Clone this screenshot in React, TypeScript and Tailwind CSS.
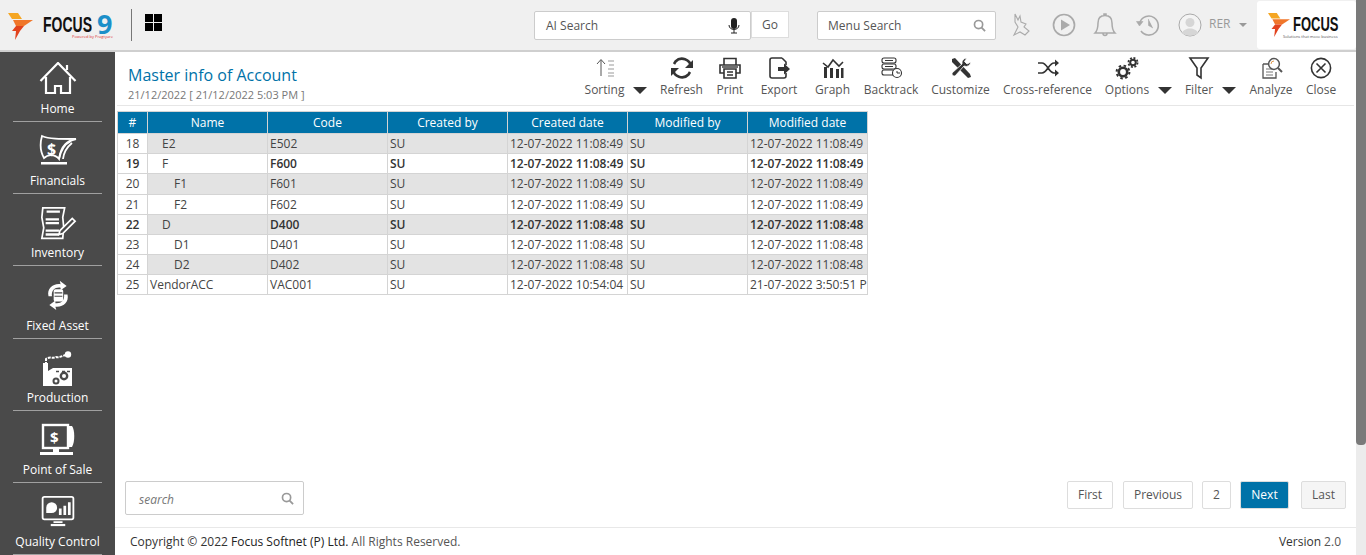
import React from "react";

const F = "font-['Open_Sans',sans-serif]";

function FocusMark({ className }: { className?: string }) {
  return (
    <svg viewBox="0 0 25 27" className={className}>
      <path d="M0 0 H10 L14 6 H4 Z" fill="#f5a623" />
      <path d="M5 7 H25 L16 13 H8 Z" fill="#f0762a" />
      <path d="M8 13 H16 L12 18 L7 27 L8 18 H4 Z" fill="#e2431e" />
    </svg>
  );
}

const S = { fill: "none", stroke: "#fff", strokeWidth: 1.8 };

function SideIcon({ n }: { n: number }) {
  const c = "w-[38px] h-[38px] mb-[1px]";
  if (n === 0)
    return (
      <svg viewBox="0 2 38 38" className={c}>
        <path d="M1.5 21 L19 3 L36.5 21 M7 17 V33 H16 V26 H22 V33 H31 V17 M28 10 V5" {...S} strokeWidth={2.2} />
      </svg>
    );
  if (n === 1)
    return (
      <svg viewBox="0 3 38 38" className={c}>
        <path d="M3 5 C10 8 20 8 37 8 C28 10 22 14 20 28 C15 22 8 24 5 27 C1 20 1 12 3 5Z" {...S} />
        <text x="8" y="24" fill="#fff" fontSize="16" fontWeight="700" fontFamily="Open Sans">$</text>
        <path d="M20 28 C22 18 26 13 32 10 M24 28 C25 20 28 16 33 12" {...S} />
        <rect x="2" y="31" width="26" height="2.5" fill="#fff" />
      </svg>
    );
  if (n === 2)
    return (
      <svg viewBox="0 0 38 40" className={c}>
        <path d="M3 2 H26 L24 12 L25 22 L24 34 H2 L4 23 L2 12 Z" {...S} />
        <path d="M7 6 H21 M6 14 H20 M6 18 H20 M6 26 H20 M6 30 H20" stroke="#fff" strokeWidth="2.4" />
        <path d="M21 26 L34 13 L37 16 L24 29 L20 30 Z" fill="#4a4a4a" stroke="#fff" strokeWidth="1.8" />
      </svg>
    );
  if (n === 3)
    return (
      <svg viewBox="0 0 38 44" className={c}>
        <path d="M8 20 C6 11 13 5 22 6 L21 2 L29 8 L22 13 L22 10 C16 9 11 13 12 20Z" fill="#fff" />
        <path d="M30 18 C32 27 25 33 16 32 L17 36 L9 30 L16 25 L16 28 C22 29 27 25 26 18Z" fill="#fff" />
        <rect x="14" y="12" width="11" height="14" rx="2" fill="#fff" />
        <path d="M15 16 H24 M15 20 H24" stroke="#4a4a4a" strokeWidth="1.3" />
      </svg>
    );
  if (n === 4)
    return (
      <svg viewBox="0 0 38 38" className={c}>
        <path d="M7 14 V8 C11 5 14 8 17 6 C20 7 23 5 27 4" fill="none" stroke="#fff" strokeWidth="2" strokeDasharray="3 1" />
        <circle cx="29" cy="3.5" r="3.2" fill="#fff" />
        <path d="M4 35 V12 H9 V20 L14 17 H33 V35 Z" fill="#fff" />
        <circle cx="17" cy="30" r="3.5" fill="#4a4a4a" />
        <circle cx="25" cy="25" r="4.4" fill="#4a4a4a" />
        <circle cx="25" cy="25" r="2" fill="#fff" />
        <circle cx="17" cy="30" r="1.5" fill="#fff" />
        <path d="M17 20.5 H20 M23 20.5 H26 M28 20.5 H31" stroke="#4a4a4a" strokeWidth="1.5" />
      </svg>
    );
  if (n === 5)
    return (
      <svg viewBox="0 1 38 38" className={c}>
        <rect x="4" y="3" width="25" height="23" {...S} strokeWidth={2.4} />
        <path d="M30 4 H33 C36 8 36 20 33 25 H30 Z" fill="#fff" />
        <rect x="1" y="30" width="33" height="3" fill="#fff" />
        <rect x="14" y="26" width="6" height="4" fill="#fff" />
        <text x="11" y="21" fill="#fff" fontSize="15" fontWeight="700" fontFamily="Open Sans">$</text>
      </svg>
    );
  return (
    <svg viewBox="0 0 38 42" className={c}>
      <rect x="2" y="2" width="34" height="25" rx="2" {...S} strokeWidth={2} />
      <path d="M6 14 a6 6 0 1 1 6 6 h-6Z" fill="#fff" />
      <path d="M20 22 V15 H23 V22Z M25 22 V12 H28 V22Z M30 22 V8 H33 V22Z" fill="#fff" />
      <rect x="14" y="29" width="10" height="2" fill="#fff" />
      <rect x="11" y="32" width="16" height="2.4" fill="#fff" />
    </svg>
  );
}

const sideItems = ["Home", "Financials", "Inventory", "Fixed Asset", "Production", "Point of Sale", "Quality Control"];

const I = { fill: "none", stroke: "#333", strokeWidth: 1.6 };

function ToolIcon({ n }: { n: string }) {
  const c = "w-[24px] h-[24px] shrink-0";
  switch (n) {
    case "Sorting":
      return (
        <svg viewBox="0 0 24 24" className={c}>
          <path d="M8 20 V4 M4 8 L8 3.5 L12 8" fill="none" stroke="#555" strokeWidth="1" />
          <path d="M15 5 H21 M16 9 H21 M15 13 H21 M15 17 H21 M15 20 H21" stroke="#999" strokeWidth="1" />
        </svg>
      );
    case "Refresh":
      return (
        <svg viewBox="0 0 24 24" className={c}>
          <path d="M21 11 A9 9 0 0 0 5.5 5.5 L4 8 M3 13 A9 9 0 0 0 18.5 18.5 L20 16" fill="none" stroke="#333" strokeWidth="2.6" />
          <path d="M23 4 V12 H15 Z M1 20 V12 H9 Z" fill="#333" />
        </svg>
      );
    case "Print":
      return (
        <svg viewBox="0 0 24 24" className={c}>
          <path d="M6 9 V2.5 H18 V9 M6 17 H2 V9 H22 V17 H18" {...I} />
          <path d="M6 13 H18 V22 H6 Z M9 16 H15 M9 19 H15" {...I} />
          <path d="M4 11 H20" stroke="#333" strokeWidth="1.4" />
        </svg>
      );
    case "Export":
      return (
        <svg viewBox="0 0 24 24" className={c}>
          <path d="M15 2 H5 Q3 2 3 4 V20 Q3 22 5 22 H17 Q19 22 19 20 V17 M19 9 V6 L15 2" {...I} />
          <path d="M11 11 H17 V7.5 L23 13 L17 18.5 V15 H11 Z" fill="#333" />
        </svg>
      );
    case "Graph":
      return (
        <svg viewBox="0 0 24 24" className={c}>
          <path d="M2 7 L7 11 L12 4 L18 10 L22 6" {...I} />
          <path d="M3 22 V11 H6 V22Z M9 22 V12 H12 V22Z M15 22 V13 H18 V22Z M20 22 V12 H22.5 V22Z" fill="#333" />
        </svg>
      );
    case "Backtrack":
      return (
        <svg viewBox="0 0 24 24" className={c}>
          <rect x="3" y="2" width="14" height="5" rx="2" fill="none" stroke="#333" strokeWidth="1.1" />
          <rect x="3" y="8" width="14" height="5" rx="2" fill="none" stroke="#333" strokeWidth="1.1" />
          <rect x="3" y="14" width="12" height="5" rx="2" fill="none" stroke="#333" strokeWidth="1.1" />
          <path d="M6 4.5 H14 M6 10.5 H14" stroke="#333" />
          <circle cx="18" cy="17" r="4.5" fill="#fff" stroke="#333" strokeWidth="1.1" />
          <path d="M18 15 V17 H21" fill="none" stroke="#333" />
        </svg>
      );
    case "Customize":
      return (
        <svg viewBox="0 0 24 24" className={c}>
          <path d="M3 3 L6 2 L21 18 L22 21 L19 22 L3 6 Z" fill="#333" />
          <path d="M22 6 A5 5 0 0 1 15 10 L6 20 A2.5 2.5 0 0 1 3 17 L13 8 A5 5 0 0 1 18 2 L15.5 5.5 L18 8 Z" fill="#333" stroke="#fff" strokeWidth="0.8" />
        </svg>
      );
    case "Cross-reference":
      return (
        <svg viewBox="0 0 24 24" className={c}>
          <path d="M2 7 H6 C11 7 13 17 18 17 H20 M2 17 H6 C11 17 13 7 18 7 H20" fill="none" stroke="#333" strokeWidth="1.7" />
          <path d="M19 3.5 L23 7 L19 10.5 Z M19 13.5 L23 17 L19 20.5 Z" fill="#333" />
        </svg>
      );
    case "Options":
      return (
        <svg viewBox="0 0 24 24" className={c}>
          <circle cx="8" cy="16" r="4.2" fill="none" stroke="#333" strokeWidth="2.6" />
          <circle cx="8" cy="16" r="6.4" fill="none" stroke="#333" strokeWidth="2" strokeDasharray="2.5 2.5" />
          <circle cx="18" cy="6.5" r="2.8" fill="none" stroke="#333" strokeWidth="2" />
          <circle cx="18" cy="6.5" r="4.6" fill="none" stroke="#333" strokeWidth="1.7" strokeDasharray="2 1.6" />
        </svg>
      );
    case "Filter":
      return (
        <svg viewBox="0 0 24 24" className={c}>
          <path d="M3 2 H21 L14 12 V22 L10 19 V12 Z" {...I} />
        </svg>
      );
    case "Analyze":
      return (
        <svg viewBox="0 0 24 24" className={c}>
          <path d="M4 8 H11 M4 8 V22 H17 V16" fill="none" stroke="#555" strokeWidth="1.3" />
          <path d="M7 13 H13 M7 16 H14 M7 19 H14" stroke="#777" />
          <circle cx="15" cy="8" r="5.4" fill="#fff" stroke="#555" strokeWidth="1.5" />
          <path d="M19 12 L23 16" stroke="#555" strokeWidth="2" />
          <path d="M12 8 A3 3 0 0 1 15 5" fill="none" stroke="#e09a50" />
        </svg>
      );
    default:
      return (
        <svg viewBox="0 0 24 24" className={c}>
          <circle cx="12" cy="12" r="9.6" {...I} />
          <path d="M7.5 7.5 L16.5 16.5 M16.5 7.5 L7.5 16.5" {...I} />
        </svg>
      );
  }
}

const tools: { n: string; w: string; caret?: boolean }[] = [
  { n: "Sorting", w: "w-[39px]", caret: true },
  { n: "Refresh", w: "w-[43px]" },
  { n: "Print", w: "w-[28px]" },
  { n: "Export", w: "w-[44px]" },
  { n: "Graph", w: "w-[37px]" },
  { n: "Backtrack", w: "w-[54px]" },
  { n: "Customize", w: "w-[59px]" },
  { n: "Cross-reference", w: "w-[89px]" },
  { n: "Options", w: "w-[44px]", caret: true },
  { n: "Filter", w: "w-[28px]", caret: true },
  { n: "Analyze", w: "w-[44px]" },
  { n: "Close", w: "w-[30px]" },
];

type Row = [string, string, string, string, boolean, boolean, number, string?];
const rows: Row[] = [
  ["18", "E2", "E502", "12-07-2022 11:08:49", true, false, 1],
  ["19", "F", "F600", "12-07-2022 11:08:49", false, true, 1],
  ["20", "F1", "F601", "12-07-2022 11:08:49", true, false, 2],
  ["21", "F2", "F602", "12-07-2022 11:08:49", false, false, 2],
  ["22", "D", "D400", "12-07-2022 11:08:48", true, true, 1],
  ["23", "D1", "D401", "12-07-2022 11:08:48", false, false, 2],
  ["24", "D2", "D402", "12-07-2022 11:08:48", true, false, 2],
  ["25", "VendorACC", "VAC001", "12-07-2022 10:54:04", false, false, 0, "21-07-2022 3:50:51 PM"],
];

const cols = ["Name", "Code", "Created by", "Created date", "Modified by", "Modified date"];
const td = "border border-[#d4d4d4] px-[2px] overflow-hidden whitespace-nowrap text-[12px] leading-[16px] align-middle max-w-0";
const pad = ["pl-[2px]", "pl-[14px]", "pl-[26px]"];
const pageBtn = "h-[28px] flex items-center justify-center rounded-[2px] border border-[#ddd] text-[12px] text-[#555]";

export default function App() {
  return (
    <div className={`${F} flex h-[555px] w-[1366px] overflow-hidden bg-white text-[#444]`}>
      <div className="flex min-w-0 flex-1 flex-col">
        <header className="flex h-[52px] shrink-0 items-center border-b-2 border-[#cfcfcf] bg-[#f0f0f0]">
          <FocusMark className="ml-[8px] mt-[3px] h-[27px] w-[25px] shrink-0" />
          <div className="ml-[10px] mt-[2px] flex w-[70px] shrink-0 flex-col">
            <div className="flex items-center">
              <span className="w-[50px] font-['Liberation_Sans',sans-serif] text-[14px] font-bold leading-[18px] text-[#111] [transform:scaleY(1.55)]">FOCUS</span>
              <span className="ml-[4px] w-[16px] text-[27px] font-bold leading-[20px] text-[#1b8fc9]">9</span>
            </div>
            <span className="self-end whitespace-nowrap text-[4px] leading-[5px] text-[#d33]">Powered by Pragtyare</span>
          </div>
          <div className="ml-[18px] h-[32px] w-px shrink-0 bg-[#777]" />
          <div className="mb-[6px] ml-[13px] grid h-[17px] w-[17px] shrink-0 grid-cols-2 gap-[1px]">
            <i className="bg-black" />
            <i className="bg-black" />
            <i className="bg-black" />
            <i className="bg-black" />
          </div>
          <div className="ml-[372px] flex h-[29px] w-[217px] shrink-0 items-center justify-between rounded-[2px] border border-[#ccc] bg-white pl-[11px] pr-[10px] pt-[1px] text-[12px] text-[#555]">
            AI Search
            <svg viewBox="0 0 12 16" className="h-[16px] w-[12px]">
              <rect x="3" y="0" width="6" height="11" rx="3" fill="#222" />
              <path d="M1 7 C1 13 11 13 11 7 M6 12 V15 M3 15 H9" fill="none" stroke="#222" strokeWidth="1" />
            </svg>
          </div>
          <div className="mb-[2px] flex h-[27px] w-[38px] shrink-0 items-center justify-center border border-[#ddd] bg-white pt-[1px] text-[12px] text-[#555]">Go</div>
          <div className="ml-[28px] flex h-[29px] w-[179px] shrink-0 items-center justify-between rounded-[2px] border border-[#ccc] bg-white pl-[10px] pr-[9px] pt-[1px] text-[12px] text-[#555]">
            Menu Search
            <svg viewBox="0 0 14 14" className="h-[13px] w-[13px]">
              <circle cx="6" cy="6" r="4.4" fill="none" stroke="#999" strokeWidth="1.8" />
              <path d="M9 9 L13 13" stroke="#999" strokeWidth="2" />
            </svg>
          </div>
          <svg viewBox="0 0 20 24" className="ml-[16px] h-[24px] w-[20px] shrink-0">
            <path d="M3 1 L6 7 L8 3 L9 9 L14 11 L12 14 L17 18 L13 22 L8 19 L2 22 L6 14 L3 9 Z" fill="none" stroke="#aaa" strokeWidth="1.1" />
          </svg>
          <svg viewBox="0 0 24 24" className="ml-[20px] h-[24px] w-[24px] shrink-0">
            <circle cx="12" cy="12" r="10.5" fill="none" stroke="#aaa" strokeWidth="1.7" />
            <path d="M9 6.5 L18 12 L9 17.5 Z" fill="#aaa" />
          </svg>
          <svg viewBox="0 0 24 24" className="ml-[17px] h-[24px] w-[24px] shrink-0">
            <path d="M2 20 C5 17 5 14 5 10 C5 5 8 2.5 12 2.5 C16 2.5 19 5 19 10 C19 14 19 17 22 20 Z M10 20.5 C10 23 14 23 14 20.5 M11 2.5 V1 H13 V2.5" fill="none" stroke="#aaa" strokeWidth="1.5" />
          </svg>
          <svg viewBox="0 0 24 24" className="ml-[19px] h-[24px] w-[24px] shrink-0">
            <path d="M4 9 A9.5 9.5 0 1 1 5 18" fill="none" stroke="#aaa" strokeWidth="1.6" />
            <path d="M0.5 8.5 L7 8.5 L3.5 13 Z M12.5 6 V12.5 L17 15" fill="#aaa" stroke="#aaa" strokeWidth="0.6" />
          </svg>
          <svg viewBox="0 0 24 24" className="ml-[18px] h-[24px] w-[24px] shrink-0">
            <circle cx="12" cy="12" r="11" fill="#f4f4f4" stroke="#aaa" strokeWidth="1" />
            <circle cx="12" cy="9.5" r="4.5" fill="#d6d6d6" />
            <path d="M4 20 C6 14 18 14 20 20 C16 23.5 8 23.5 4 20Z" fill="#d6d6d6" />
          </svg>
          <span className="mb-[2px] ml-[7px] w-[22px] shrink-0 text-[12px] text-[#999]">RER</span>
          <span className="ml-[8px] h-0 w-0 shrink-0 border-x-[4px] border-t-[4px] border-x-transparent border-t-[#999]" />
          <div className="ml-[10px] mb-[1px] flex h-[48px] w-[99px] shrink-0 items-center rounded-[3px] bg-white pl-[11px]">
            <FocusMark className="mt-[1px] h-[24px] w-[22px] shrink-0" />
            <div className="ml-[3px] mt-[7px] flex flex-col items-start">
              <span className="w-[46px] font-['Liberation_Sans',sans-serif] text-[13px] font-bold leading-[16px] text-[#111] [transform:scaleY(1.6)]">FOCUS</span>
              <span className="ml-[-10px] mt-[1px] whitespace-nowrap text-[4px] leading-[5px] text-[#555]">Solutions that move business</span>
            </div>
          </div>
        </header>
        <div className="flex min-h-0 flex-1">
          <aside className="flex w-[115px] shrink-0 flex-col overflow-hidden bg-[#4a4a4a] px-[13px]">
            {sideItems.map((s, i) => (
              <div key={s} className="flex h-[72.2px] shrink-0 flex-col items-center justify-end overflow-hidden border-b border-[#a0a0a0] pb-[4px] text-white first:h-[70px]">
                <SideIcon n={i} />
                <span className="whitespace-nowrap text-[12px] leading-[16px]">{s}</span>
              </div>
            ))}
          </aside>
          <main className="flex min-w-0 flex-1 flex-col">
            <div className="mx-[2px] flex h-[54px] shrink-0 items-start justify-between border-b border-[#e6e6e6]">
              <div className="ml-[11px] mt-[12px]">
                <div className="text-[16px] leading-[22px] text-[#0072a8]">Master info of Account</div>
                <div className="mt-[2px] text-[11px] leading-[14px] text-[#777]">21/12/2022 [ 21/12/2022 5:03 PM ]</div>
              </div>
              <div className="mr-[18px] mt-[4px] flex gap-[13px]">
                {tools.map((t) => (
                  <div key={t.n} className="flex items-end">
                    <div className={`${t.w} flex flex-col items-center`}>
                      <ToolIcon n={t.n} />
                      <div className="mt-[2px] h-[16px] whitespace-nowrap text-[12px] leading-[16px] text-[#555]">{t.n}</div>
                    </div>
                    {t.caret && <span className="mb-[4px] ml-[9px] h-0 w-0 border-x-[7px] border-t-[7px] border-x-transparent border-t-[#333]" />}
                  </div>
                ))}
              </div>
            </div>
            <div className="ml-[2px] mt-[5px] min-h-0 flex-1">
              <table className="w-[751px] table-fixed border-collapse">
                <colgroup>
                  <col className="w-[30px]" />
                  <col className="w-[120px]" />
                  <col className="w-[120px]" />
                  <col className="w-[120px]" />
                  <col className="w-[120px]" />
                  <col className="w-[120px]" />
                  <col className="w-[120px]" />
                </colgroup>
                <thead>
                  <tr>
                    {["#", ...cols].map((c) => (
                      <th key={c} className="h-[22px] border border-[#d4d4d4] bg-[#0072a8] p-0 text-center text-[12px] font-normal leading-[16px] text-white">
                        {c}
                      </th>
                    ))}
                  </tr>
                </thead>
                <tbody>
                  {rows.map((r) => {
                    const bg = r[4] ? "bg-[#e3e3e3]" : "bg-white";
                    const b = r[5] ? "font-semibold text-[#333]" : "";
                    return (
                      <tr key={r[0]} className={r[0] === "20" ? "h-[21px]" : "h-[20px]"}>
                        <td className={`${td} bg-white text-center ${b}`}>{r[0]}</td>
                        <td className={`${td} ${bg} ${pad[r[6]]} text-left`}>{r[1]}</td>
                        <td className={`${td} ${bg} ${b} text-left`}>{r[2]}</td>
                        <td className={`${td} ${bg} ${b} text-left`}>SU</td>
                        <td className={`${td} ${bg} ${b} text-left`}>{r[3]}</td>
                        <td className={`${td} ${bg} ${b} text-left`}>SU</td>
                        <td className={`${td} ${bg} ${b} text-left`}>{r[7] ?? r[3]}</td>
                      </tr>
                    );
                  })}
                </tbody>
              </table>
            </div>
            <div className="flex h-[34px] shrink-0 items-start justify-between pl-[10px] pr-[10px]">
              <div className="flex h-[34px] w-[179px] items-center justify-between rounded-[2px] border border-[#ccc] pl-[13px] pr-[9px] text-[12px] italic text-[#777]">
                <span className="pt-[3px]">search</span>
                <svg viewBox="0 0 14 14" className="h-[13px] w-[13px]">
                  <circle cx="6" cy="6" r="4.4" fill="none" stroke="#999" strokeWidth="1.8" />
                  <path d="M9 9 L13 13" stroke="#999" strokeWidth="2" />
                </svg>
              </div>
              <div className="flex items-center">
                <div className={`${pageBtn} w-[46px]`}>First</div>
                <div className={`${pageBtn} ml-[10px] w-[70px]`}>Previous</div>
                <div className={`${pageBtn} ml-[9px] w-[29px]`}>2</div>
                <div className={`${pageBtn} ml-[9px] w-[49px] border-[#0072a8] bg-[#0072a8] text-white`}>Next</div>
                <div className={`${pageBtn} ml-[12px] w-[45px] bg-[#f5f5f5]`}>Last</div>
              </div>
            </div>
            <footer className="mt-[12px] flex h-[28px] shrink-0 items-center justify-between border-t border-[#e8e8e8] pl-[15px] pr-[15px] text-[12px] text-[#555]">
              <div>
                <span className="font-medium text-[#333]">
                  Copyright © 2022 <span className="text-[#222]">Focus Softnet (P) Ltd.</span>
                </span>{" "}
                All Rights Reserved.
              </div>
              <div>
                <span className="font-medium text-[#333]">Version</span> 2.0
              </div>
            </footer>
          </main>
        </div>
      </div>
      <div className="flex w-[10px] shrink-0 flex-col bg-[#ececec]">
        <div className="h-[445px] w-full rounded-b-[4px] bg-[#7a7a7a]" />
      </div>
    </div>
  );
}
